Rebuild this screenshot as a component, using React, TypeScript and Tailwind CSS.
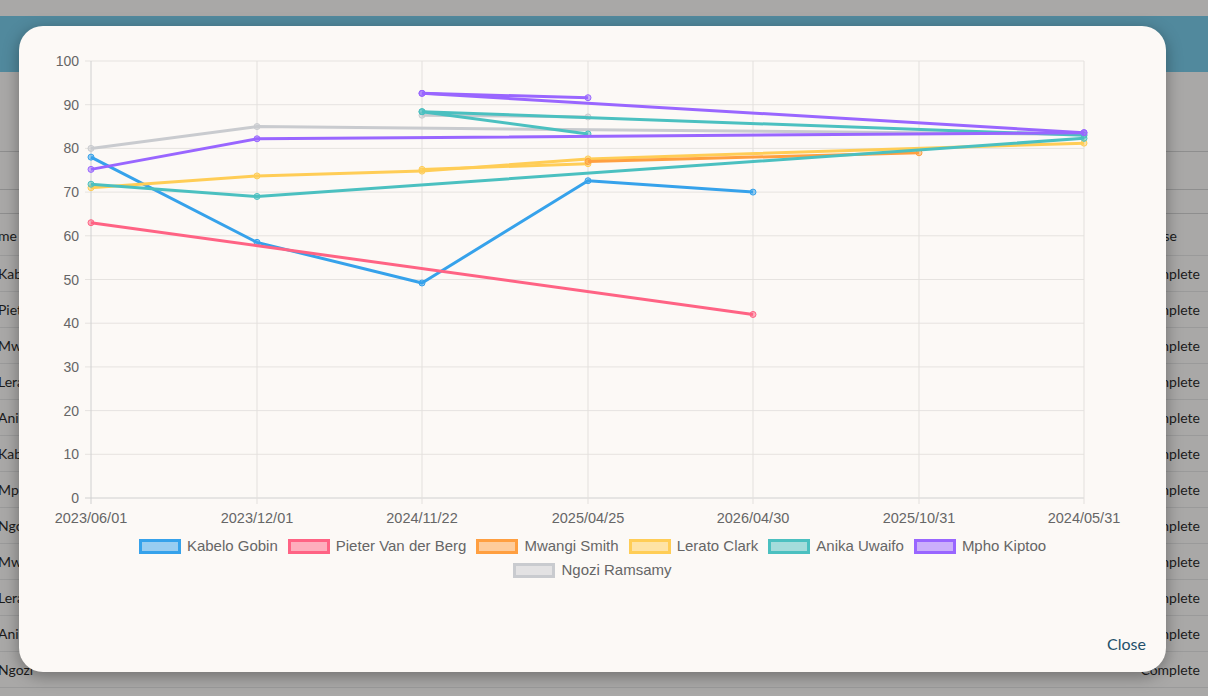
import React from "react";

const X = [91, 257, 422, 588, 753, 919, 1084];
const Y = (v: number) => 498 - v * 4.37;
type S = { c: string; pts: [number, number][] };
const series: S[] = [
  { c: "#c9cbcf", pts: [[0, 80], [1, 85], [6, 83.2]] },
  { c: "#c9cbcf", pts: [[2, 87.6], [3, 87.2]] },
  { c: "#36a2eb", pts: [[0, 78], [1, 58.5], [2, 49.2], [3, 72.6], [4, 70]] },
  { c: "#ff6384", pts: [[0, 63], [4, 42]] },
  { c: "#ffcd56", pts: [[0, 71], [1, 73.7], [2, 74.8], [3, 77.6], [6, 81.2]] },
  { c: "#ffcd56", pts: [[2, 75.2], [3, 76.5]] },
  { c: "#ff9f40", pts: [[3, 77], [5, 79]] },
  { c: "#4bc0c0", pts: [[0, 71.8], [1, 69], [6, 82.3]] },
  { c: "#4bc0c0", pts: [[2, 88.4], [3, 83.3]] },
  { c: "#4bc0c0", pts: [[2, 88.4], [6, 83]] },
  { c: "#9966ff", pts: [[0, 75.2], [1, 82.2], [6, 83.6]] },
  { c: "#9966ff", pts: [[2, 92.6], [3, 91.6]] },
  { c: "#9966ff", pts: [[2, 92.6], [6, 83.6]] },
];
const dates = ["2023/06/01", "2023/12/01", "2024/11/22", "2025/04/25", "2026/04/30", "2025/10/31", "2024/05/31"];
const legend = [
  ["Kabelo Gobin", "#36a2eb"],
  ["Pieter Van der Berg", "#ff6384"],
  ["Mwangi Smith", "#ff9f40"],
  ["Lerato Clark", "#ffcd56"],
  ["Anika Uwaifo", "#4bc0c0"],
  ["Mpho Kiptoo", "#9966ff"],
  ["Ngozi Ramsamy", "#c9cbcf"],
];
const left = ["me", "Kab", "Piet", "Mw", "Lera", "Anik", "Kab", "Mph", "Ngo", "Mw", "Lera", "Anik", "Ngozi"];

export default function App() {
  return (
    <div className="relative w-[1208px] h-[696px] overflow-hidden bg-[#a9a8a7]" style={{ fontFamily: "Lato, sans-serif" }}>
      <div className="h-4 bg-[#a9a8a7]" />
      <div className="h-14 bg-[#51899d]" />
      <div className="h-[80px] border-b border-[#8e8e8e]" />
      <div className="h-[38px] border-b border-[#8e8e8e]" />
      <div className="h-[24px] border-b border-[#8e8e8e]" />
      <div className="flex flex-col text-[14px] text-[#1b1b1b] pt-[2px]">
        {left.map((t, i) => (
          <div key={i} className={`flex items-center justify-between border-b border-[#9a9a9a] ${i === 0 ? "h-[40px]" : "h-9"}`}>
            <span className="-ml-[2px]">{t}</span>
            <span className={i === 0 ? "mr-[31px]" : "mr-2"}>{i === 0 ? "se" : "Complete"}</span>
          </div>
        ))}
      </div>
      <div className="absolute left-[19px] top-[26px] w-[1147px] h-[646px] rounded-[24px] bg-[#fcf9f6] shadow-[0_4px_16px_rgba(0,0,0,0.35)] flex flex-col">
        <svg width="1147" height="506" viewBox="19 26 1147 506" style={{ fontFamily: "'Liberation Sans', Arial, sans-serif" }}>
          {[0, 10, 20, 30, 40, 50, 60, 70, 80, 90, 100].map((v) => (
            <g key={v}>
              <line x1={85} x2={1084} y1={Y(v)} y2={Y(v)} stroke={v === 0 ? "#d0d0d0" : "#e6e3e0"} strokeWidth={1} />
              <text x={79} y={Y(v) + 5} textAnchor="end" fontSize={14} fill="#666">{v}</text>
            </g>
          ))}
          {X.map((x, i) => (
            <g key={i}>
              <line x1={x} x2={x} y1={61} y2={504} stroke={i === 0 ? "#d0d0d0" : "#e3e0dd"} strokeWidth={1} />
              <text x={x} y={523} textAnchor="middle" fontSize={14.5} fill="#666">{dates[i]}</text>
            </g>
          ))}
          {series.map((s, i) => (
            <g key={i}>
              <polyline fill="none" stroke={s.c} strokeWidth={3} strokeLinejoin="round" points={s.pts.map(([a, v]) => `${X[a]},${Y(v)}`).join(" ")} />
              {s.pts.map(([a, v], j) => (
                <circle key={j} cx={X[a]} cy={Y(v)} r={3} fill={s.c} fillOpacity={0.5} stroke={s.c} strokeWidth={1} />
              ))}
            </g>
          ))}
        </svg>
        <div className="mx-auto w-[960px] mt-[6px] flex flex-wrap justify-center gap-x-[10px] gap-y-[8px] text-[15px] text-[#666]" style={{ fontFamily: "'Liberation Sans', Arial, sans-serif" }}>
          {legend.map(([n, c]) => (
            <div key={n} className="flex items-center gap-[6px] h-4">
              <span className="w-[42px] h-[15px] border-[3px]" style={{ borderColor: c, backgroundColor: c + "80" }} />
              <span>{n}</span>
            </div>
          ))}
        </div>
        <div className="mt-auto flex justify-end pr-[20px] pb-[16px] text-[16px] text-[#23506b]">Close</div>
      </div>
    </div>
  );
}
